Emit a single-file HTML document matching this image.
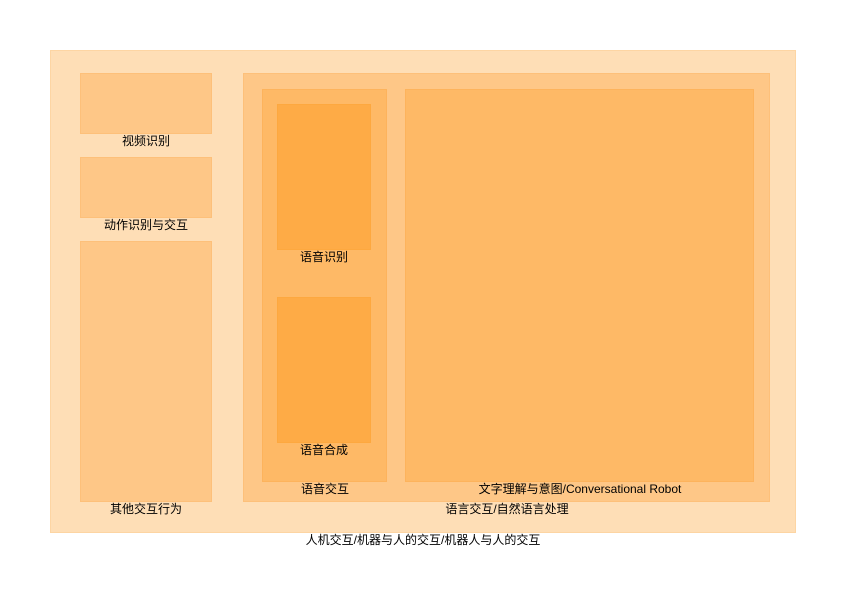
<html><head><style>
body{margin:0;width:846px;height:597px;background:#fff;position:relative;font-family:"Liberation Sans","Noto Sans CJK SC",sans-serif;font-size:12px;color:#000}
.b{position:absolute;box-sizing:border-box}
.l{position:absolute;text-align:center;white-space:nowrap;line-height:14px}
</style></head><body>
<div class="b" style="left:50px;top:50px;width:746px;height:483px;background:#fedeb6;border:1px solid #fdd5a3"></div>
<div class="b" style="left:80px;top:73px;width:132px;height:61px;background:#fec787;border:1px solid #fdc07a"></div>
<div class="b" style="left:80px;top:157px;width:132px;height:61px;background:#fec787;border:1px solid #fdc07a"></div>
<div class="b" style="left:80px;top:241px;width:132px;height:261px;background:#fec787;border:1px solid #fdc07a"></div>
<div class="b" style="left:243px;top:73px;width:527px;height:429px;background:#fec787;border:1px solid #fdc07a"></div>
<div class="b" style="left:262px;top:89px;width:125px;height:393px;background:#feb966;border:1px solid #fdb35c"></div>
<div class="b" style="left:405px;top:89px;width:349px;height:393px;background:#feb966;border:1px solid #fdb35c"></div>
<div class="b" style="left:277px;top:104px;width:94px;height:146px;background:#feab46;border:1px solid #fda83f"></div>
<div class="b" style="left:277px;top:297px;width:94px;height:146px;background:#feab46;border:1px solid #fda83f"></div>
<div class="l" style="left:46px;width:200px;top:134px">视频识别</div>
<div class="l" style="left:46px;width:200px;top:218px">动作识别与交互</div>
<div class="l" style="left:46px;width:200px;top:502px">其他交互行为</div>
<div class="l" style="left:224px;width:200px;top:250px">语音识别</div>
<div class="l" style="left:224px;width:200px;top:443px">语音合成</div>
<div class="l" style="left:225px;width:200px;top:482px">语音交互</div>
<div class="l" style="left:380px;width:400px;top:482px">文字理解与意图/Conversational Robot</div>
<div class="l" style="left:307px;width:400px;top:502px">语言交互/自然语言处理</div>
<div class="l" style="left:223px;width:400px;top:533px">人机交互/机器与人的交互/机器人与人的交互</div>
</body></html>
